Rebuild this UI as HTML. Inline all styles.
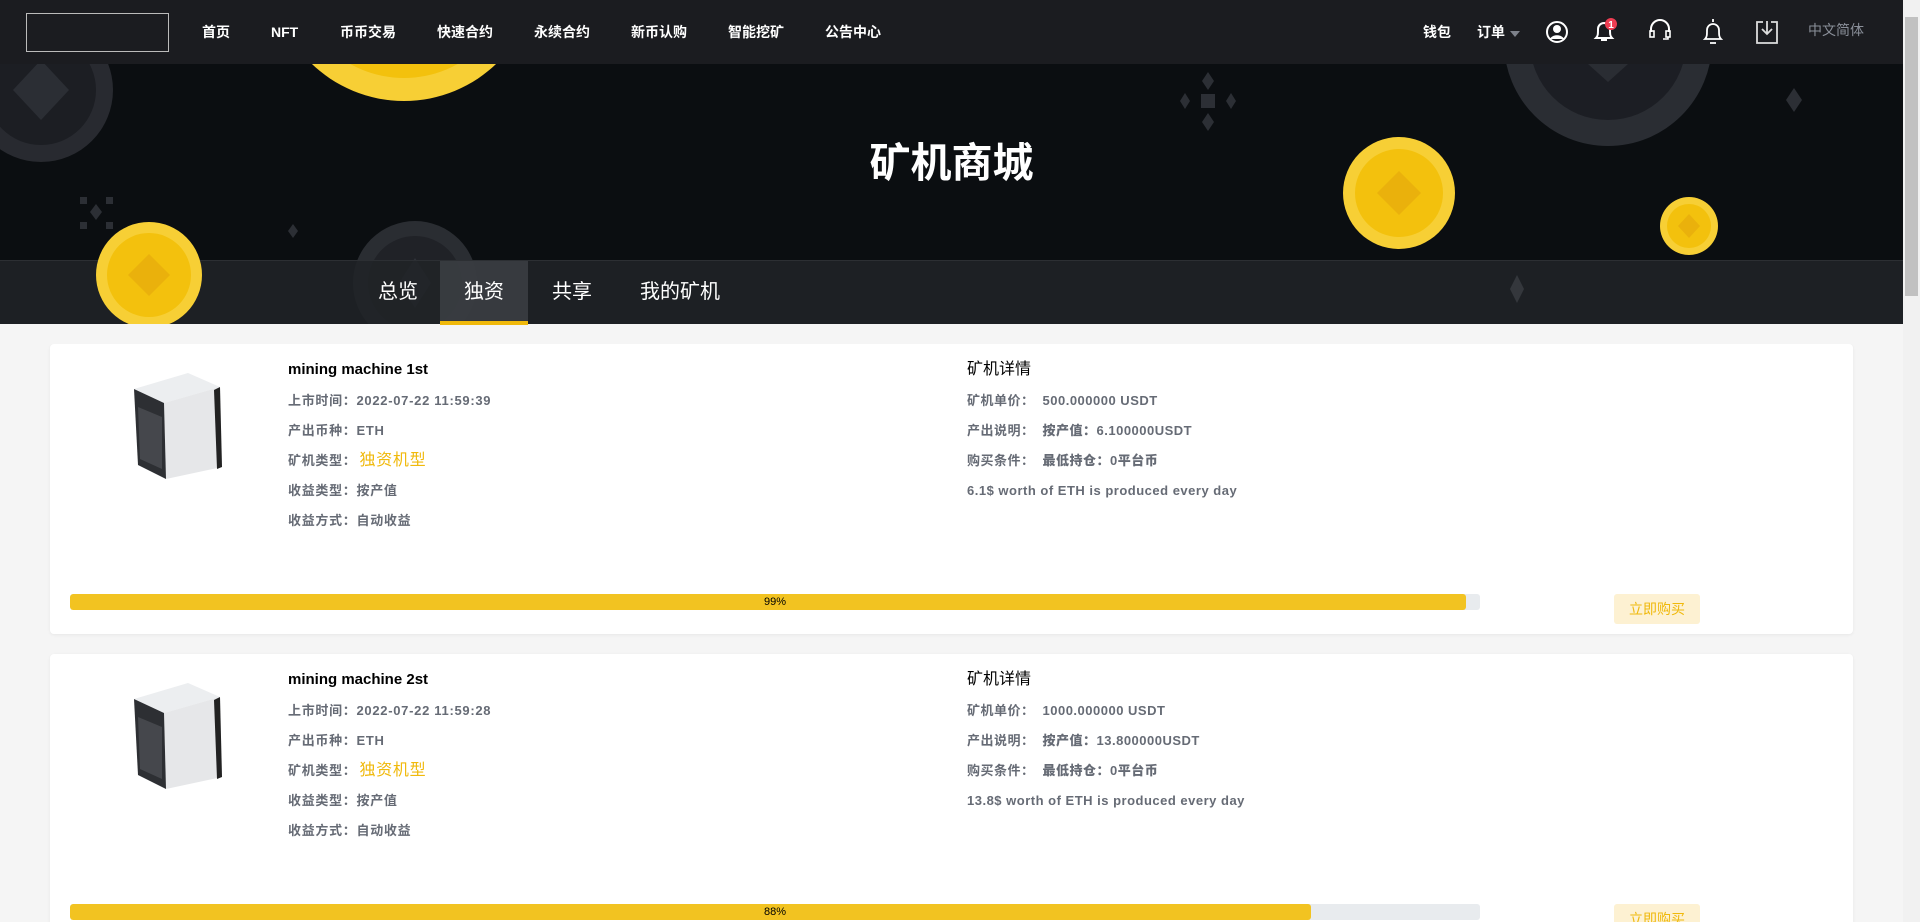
<!DOCTYPE html>
<html><head><meta charset="utf-8">
<style>
*{margin:0;padding:0;box-sizing:border-box}
html,body{width:1920px;height:922px;overflow:hidden}
body{background:#f5f5f5;font-family:"Liberation Sans","Noto Sans CJK SC",sans-serif;position:relative}
.nav{position:absolute;left:0;top:0;width:1903px;height:64px;background:#1b1c20;z-index:5}
.logo{position:absolute;left:26px;top:13px;width:143px;height:39px;border:1px solid #bbb}
.nav a{position:absolute;top:22px;color:#fff;font-size:14px;font-weight:bold;text-decoration:none;line-height:20px}
.nav svg{position:absolute}
.banner{position:absolute;left:0;top:64px;width:1903px;height:260px;background:#0b0e11}
.title{position:absolute;left:0;width:1903px;top:136px;text-align:center;color:#fff;font-size:41px;font-weight:bold;z-index:3;line-height:54px}
.tabs{position:absolute;left:0;top:260px;width:1903px;height:64px;background:rgba(32,35,39,.88);border-top:1px solid #2c2f33;z-index:2}
.tab{position:absolute;top:0;height:64px;line-height:62px;color:#fff;font-size:20px;text-align:center}
.tab.on{background:rgba(60,63,68,.85);border-bottom:4px solid #f0b90b}
.scroll{position:absolute;right:0;top:0;width:17px;height:922px;background:#f1f1f1}
.scroll div{position:absolute;left:2px;top:17px;width:13px;height:279px;background:#c1c1c1}
.card{position:absolute;left:50px;width:1803px;height:290px;background:#fff;border-radius:4px;box-shadow:0 1px 3px rgba(0,0,0,.06)}
.mimg{position:absolute;left:78px;top:29px}
.l{position:absolute;left:238px;font-size:13px;color:#666b75;font-weight:bold;line-height:20px;white-space:nowrap;letter-spacing:.7px}
.t{font-size:15px;color:#000;font-weight:bold;letter-spacing:0}
.y{color:#f0b90b;font-size:16px;font-weight:normal;margin-left:3px}
.r{position:absolute;left:917px;font-size:13px;color:#666b75;font-weight:bold;line-height:20px;white-space:nowrap;letter-spacing:.5px}
.r.t{font-size:16px;color:#000;font-weight:normal;letter-spacing:0}
.r b{margin-left:8px}
.bar{position:absolute;left:20px;top:250px;width:1410px;height:16px;background:#e8ebee;border-radius:3px;overflow:hidden}
.bar div{height:16px;background:#f2c321;border-radius:3px}
.bar span{position:absolute;left:0;top:0;width:100%;text-align:center;font-size:11px;line-height:16px;color:#000}
.btn{position:absolute;left:1564px;top:250px;width:86px;height:30px;background:#fdf1d2;border-radius:3px;color:#f0b90b;font-size:14px;text-align:center;line-height:30px}
.over{position:absolute;left:0;top:0;z-index:3}
</style></head><body>
<div class="banner">
<svg width="1903" height="260" style="position:absolute;left:0;top:0;overflow:hidden">
 <circle cx="404" cy="-96" r="133" fill="#f7cf35"/><circle cx="404" cy="-96" r="110" fill="#f3c10d"/>
 <circle cx="41" cy="26" r="72" fill="#282a30"/><circle cx="41" cy="26" r="55" fill="#1c1e23"/>
 <path d="M41 -4 L69 26 L41 56 L13 26Z" fill="#2b2e34"/>
 <circle cx="1608" cy="-22" r="104" fill="#2a2d33"/><circle cx="1608" cy="-22" r="78" fill="#1c1e24"/>
 <path d="M1588 0 L1628 0 L1608 18Z" fill="#2a2d33"/>
 <circle cx="1399" cy="129" r="56" fill="#f7cf35"/><circle cx="1399" cy="129" r="44" fill="#f3c10d"/>
 <path d="M1399 107 L1421 129 L1399 151 L1377 129Z" fill="#eab10c"/>
 <circle cx="1689" cy="162" r="29" fill="#f7cf35"/><circle cx="1689" cy="162" r="22" fill="#f3c10d"/>
 <path d="M1689 150 L1700 162 L1689 174 L1678 162Z" fill="#eab10c"/>
 <g fill="#2c2f35"><rect x="1201" y="30" width="14" height="14"/><path d="M1208 8l6 9-6 9-6-9z M1208 49l6 9-6 9-6-9z M1185 29l5 8-5 8-5-8z M1231 29l5 8-5 8-5-8z M1794 24l8 12-8 12-8-12z"/>
 <rect x="80" y="133" width="7" height="7"/><rect x="106" y="133" width="7" height="7"/><rect x="80" y="158" width="7" height="7"/><rect x="106" y="158" width="7" height="7"/><path d="M96 140l6 8-6 8-6-8z M293 160l5 7-5 7-5-7z"/></g>
</svg>
<svg width="500" height="260" style="position:absolute;left:0;top:0;overflow:visible">
 <circle cx="415" cy="219" r="62" fill="#2a2d32"/><circle cx="415" cy="219" r="47" fill="#202227"/>
 <path d="M415 194l16 25-16 25-16-25z" fill="#30333a"/>
</svg>
</div>
<svg class="over" width="300" height="325">
 <circle cx="149" cy="275" r="53" fill="#f7cf35"/><circle cx="149" cy="275" r="42" fill="#f3c10d"/>
 <path d="M149 254 L170 275 L149 296 L128 275Z" fill="#eab10c"/>
 <rect x="0" y="324" width="300" height="1" fill="#f5f5f5"/>
</svg>
<div style="position:absolute;left:0;top:324px;width:1903px;height:20px;background:#f5f5f5;z-index:2"></div>
<div class="title">矿机商城</div>
<div class="tabs">
 <div class="tab" style="left:356px;width:84px">总览</div>
 <div class="tab on" style="left:440px;width:88px">独资</div>
 <div class="tab" style="left:538px;width:68px">共享</div>
 <div class="tab" style="left:630px;width:100px">我的矿机</div>
 <svg width="20" height="30" style="position:absolute;left:1507px;top:14px"><path d="M10 0l7 14-7 14-7-14z" fill="#34373c"/></svg>
</div>
<div class="nav">
 <div class="logo"></div>
 <a style="left:202px">首页</a><a style="left:271px">NFT</a><a style="left:340px">币币交易</a><a style="left:437px">快速合约</a><a style="left:534px">永续合约</a><a style="left:631px">新币认购</a><a style="left:728px">智能挖矿</a><a style="left:825px">公告中心</a>
 <a style="left:1423px">钱包</a><a style="left:1477px">订单</a>
 <svg width="12" height="8" style="left:1509px;top:30px"><path d="M1 1h10L6 7z" fill="#7d818a"/></svg>
 <svg width="24" height="24" style="left:1545px;top:20px"><circle cx="12" cy="12" r="10" fill="none" stroke="#fff" stroke-width="2"/><circle cx="12" cy="9" r="4" fill="#fff"/><path d="M5 19c2-5 12-5 14 0" fill="#fff"/></svg>
 <svg width="30" height="28" style="left:1590px;top:16px"><path d="M6 22c2-2 2-4 2-9a6 6 0 0 1 12 0c0 5 0 7 2 9z M11 24h6" fill="none" stroke="#fff" stroke-width="2"/><circle cx="21" cy="8" r="6" fill="#ee3d52"/><text x="21" y="12" font-size="10" font-weight="bold" fill="#fff" text-anchor="middle" font-family="Liberation Sans">1</text></svg>
 <svg width="26" height="26" style="left:1647px;top:18px"><path d="M4 14v-3a9 9 0 0 1 18 0v3" fill="none" stroke="#fff" stroke-width="2"/><rect x="3" y="13" width="4" height="6" fill="none" stroke="#fff" stroke-width="1.6"/><rect x="19" y="13" width="4" height="6" fill="none" stroke="#fff" stroke-width="1.6"/><path d="M21 19v2h-5" fill="none" stroke="#fff" stroke-width="1.6"/></svg>
 <svg width="24" height="28" style="left:1701px;top:18px"><path d="M12 1v3M4 21c2-2 2-4 2-9a6 6 0 0 1 12 0c0 5 0 7 2 9z M9 25h6" fill="none" stroke="#fff" stroke-width="1.8"/></svg>
 <svg width="24" height="26" style="left:1755px;top:19px"><path d="M8 3H2v21h20V3h-6 M12 2v13 M7 10l5 5 5-5" fill="none" stroke="#ddd" stroke-width="1.8"/></svg>
 <a style="left:1808px;color:#8a8f99;font-weight:normal;top:20px">中文简体</a>
</div>

<div class="card" style="top:344px">
 <svg class="mimg" width="100" height="106" viewBox="0 0 100 106"><path d="M6 16 L60 0 L92 14 L36 30Z" fill="#eceef0"/><path d="M36 30 L92 14 L94 94 L38 106Z" fill="#e6e7e9"/><path d="M6 16 L36 30 L38 106 L10 92Z" fill="#2d2f33"/><path d="M10 34l24 10v52l-22-10z" fill="#55585d" opacity=".6"/><path d="M86 17l6-3 2 80-5 2z" fill="#222"/></svg>
 <div class="l t" style="top:16px">mining machine 1st</div>
 <div class="l" style="top:47px">上市时间：2022-07-22 11:59:39</div>
 <div class="l" style="top:77px">产出币种：ETH</div>
 <div class="l" style="top:107px">矿机类型：<span class="y">独资机型</span></div>
 <div class="l" style="top:137px">收益类型：按产值</div>
 <div class="l" style="top:167px">收益方式：自动收益</div>
 <div class="r t" style="top:16px">矿机详情</div>
 <div class="r" style="top:47px">矿机单价：<b>500.000000 USDT</b></div>
 <div class="r" style="top:77px">产出说明：<b>按产值：6.100000USDT</b></div>
 <div class="r" style="top:107px">购买条件：<b>最低持仓：0平台币</b></div>
 <div class="r" style="top:137px">6.1$ worth of ETH is produced every day</div>
 <div class="bar"><div style="width:1396px"></div><span>99%</span></div>
 <div class="btn">立即购买</div>
</div>
<div class="card" style="top:654px">
 <svg class="mimg" width="100" height="106" viewBox="0 0 100 106"><path d="M6 16 L60 0 L92 14 L36 30Z" fill="#eceef0"/><path d="M36 30 L92 14 L94 94 L38 106Z" fill="#e6e7e9"/><path d="M6 16 L36 30 L38 106 L10 92Z" fill="#2d2f33"/><path d="M10 34l24 10v52l-22-10z" fill="#55585d" opacity=".6"/><path d="M86 17l6-3 2 80-5 2z" fill="#222"/></svg>
 <div class="l t" style="top:16px">mining machine 2st</div>
 <div class="l" style="top:47px">上市时间：2022-07-22 11:59:28</div>
 <div class="l" style="top:77px">产出币种：ETH</div>
 <div class="l" style="top:107px">矿机类型：<span class="y">独资机型</span></div>
 <div class="l" style="top:137px">收益类型：按产值</div>
 <div class="l" style="top:167px">收益方式：自动收益</div>
 <div class="r t" style="top:16px">矿机详情</div>
 <div class="r" style="top:47px">矿机单价：<b>1000.000000 USDT</b></div>
 <div class="r" style="top:77px">产出说明：<b>按产值：13.800000USDT</b></div>
 <div class="r" style="top:107px">购买条件：<b>最低持仓：0平台币</b></div>
 <div class="r" style="top:137px">13.8$ worth of ETH is produced every day</div>
 <div class="bar"><div style="width:1241px"></div><span>88%</span></div>
 <div class="btn">立即购买</div>
</div>
<div class="scroll"><div></div></div>
</body></html>
